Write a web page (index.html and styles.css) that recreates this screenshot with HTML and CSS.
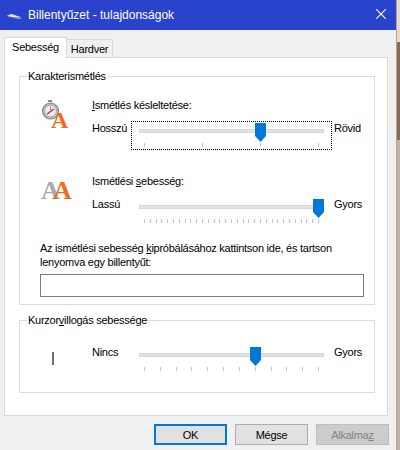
FILE: index.html
```html
<!DOCTYPE html>
<html lang="hu">
<head>
    <meta charset="UTF-8">
    <meta name="viewport" content="width=device-width, initial-scale=1.0">
    <title>Billentyűzet - tulajdonságok</title>
    <link rel="stylesheet" href="styles.css">
</head>
<body>
    <div class="window">
        <div class="titlebar">
            <svg class="app-icon" width="16" height="16" viewBox="0 0 16 16">
                <path d="M0 9 L4 7 L14 10 L14 12 L10 12 Z" fill="#8f95a3"/>
                <path d="M0 9 L4 7 L13 10 L6 10 Z" fill="#e6e8ee"/>
            </svg>
            <span class="title">Billentyűzet - tulajdonságok</span>
            <svg class="close" width="10" height="10" viewBox="0 0 10 10">
                <path d="M0 0 L10 10 M10 0 L0 10" stroke="#fff" stroke-width="1.1" fill="none"/>
            </svg>
        </div>

        <div class="content">
            <div class="tabs">
                <div class="tab active">Sebesség</div>
                <div class="tab">Hardver</div>
            </div>

            <div class="panel">
                <!-- Karakterismétlés -->
                <fieldset class="group group-repeat">
                    <legend>Karakterismétlés</legend>
                    <div class="group-inner">
                        <div class="setting">
                            <svg class="setting-icon" width="32" height="40" viewBox="0 0 32 40">
                                <rect x="7" y="3" width="4" height="2" fill="#8a8a8a"/>
                                <circle cx="9.5" cy="14" r="8" fill="#bdbdbd" stroke="#858585" stroke-width="1.2"/>
                                <circle cx="9.5" cy="14" r="5.8" fill="#ededed" stroke="#a4a4a4" stroke-width="0.8"/>
                                <path d="M6 17 L13 12" stroke="#c8283a" stroke-width="1.4"/>
                                <path d="M9.5 9.5 V13" stroke="#8a8a8a" stroke-width="1"/>
                                <text class="icon-letter" x="10" y="31" font-size="24" fill="#f26a1b">A</text>
                            </svg>
                            <div class="setting-body">
                                <div class="caption"><u>I</u>smétlés késleltetése:</div>
                                <div class="slider-row">
                                    <span class="end-label">Hosszú</span>
                                    <div class="slider focused">
                                        <div class="track"></div>
                                        <div class="thumb thumb-delay"></div>
                                        <div class="ticks">
                                            <i></i><i></i><i></i><i></i>
                                        </div>
                                    </div>
                                    <span class="end-label right">Rövid</span>
                                </div>
                            </div>
                        </div>

                        <div class="setting setting-rate">
                            <svg class="setting-icon rate-icon" width="32" height="32" viewBox="0 0 32 32">
                                <text class="icon-letter" x="0" y="22" font-size="26" fill="#a9a9a9">A</text>
                                <text class="icon-letter" x="12" y="22" font-size="26" fill="#f26a1b">A</text>
                            </svg>
                            <div class="setting-body">
                                <div class="caption">Ismétlési <u>s</u>ebesség:</div>
                                <div class="slider-row">
                                    <span class="end-label">Lassú</span>
                                    <div class="slider">
                                        <div class="track"></div>
                                        <div class="thumb thumb-rate"></div>
                                        <div class="ticks">
                                            <i></i><i></i><i></i><i></i><i></i><i></i><i></i><i></i><i></i><i></i><i></i><i></i><i></i><i></i><i></i><i></i><i></i><i></i><i></i><i></i><i></i><i></i><i></i><i></i><i></i><i></i><i></i><i></i><i></i><i></i><i></i>
                                        </div>
                                    </div>
                                    <span class="end-label right">Gyors</span>
                                </div>
                            </div>
                        </div>

                        <p class="try-text">Az ismétlési sebesség <u>k</u>ipróbálásához kattintson ide, és tartson<br>lenyomva egy billentyűt:</p>
                        <div class="try-input"></div>
                    </div>
                </fieldset>

                <!-- Kurzorvillogás -->
                <fieldset class="group group-cursor">
                    <legend>Kurzor<u>v</u>illogás sebessége</legend>
                    <div class="cursor-row">
                        <div class="cursor-col"><span class="cursor-bar"></span></div>
                        <span class="end-label">Nincs</span>
                        <div class="slider">
                            <div class="track"></div>
                            <div class="thumb thumb-cursor"></div>
                            <div class="ticks">
                                <i></i><i></i><i></i><i></i><i></i><i></i><i></i><i></i><i></i><i></i><i></i><i></i>
                            </div>
                        </div>
                        <span class="end-label right">Gyors</span>
                    </div>
                </fieldset>
            </div>

            <div class="buttons">
                <button class="btn default">OK</button>
                <button class="btn">Mégse</button>
                <button class="btn" disabled>Alkalma<u>z</u></button>
            </div>
        </div>
    </div>
</body>
</html>
```

FILE: styles.css
```css
* {
    box-sizing: border-box;
}

html, body {
    height: 100%;
}

body {
    margin: 0;
    overflow: hidden;
    background: linear-gradient(#dcdcdc 0, #dcdcdc 42px, #77716d 42px, #77716d 140px, #b5b5b5 140px);
    font-family: "Liberation Sans", Roboto, sans-serif;
    font-size: 11px;
    letter-spacing: -0.26px;
    color: #000;
}

u {
    text-underline-offset: 1px;
}

.window {
    width: 397px;
    height: 450px;
    background: #f0f0f0;
    border-right: 1px solid #e8975a;
}

.titlebar {
    display: flex;
    align-items: center;
    height: 30px;
    padding: 0 10px 0 7px;
    background: #2a43cc;
    color: #fff;
    font-size: 12px;
    letter-spacing: 0;
}

.app-icon {
    margin-right: 5px;
}

.title {
    flex: 1;
}

.close {
    margin-top: -2px;
}

.content {
    padding: 7px 8px 0 4px;
}

.tabs {
    display: flex;
    align-items: flex-end;
    height: 20px;
}

.tab {
    width: 46px;
    height: 18px;
    line-height: 18px;
    text-align: center;
    background: #f0f0f0;
    border: 1px solid #d9d9d9;
    border-bottom: none;
    border-left: none;
}

.tab.active {
    width: 63px;
    height: 21px;
    margin-bottom: -1px;
    line-height: 18px;
    background: #fff;
    border-left: 1px solid #d9d9d9;
    position: relative;
    z-index: 1;
}

.panel {
    height: 359px;
    padding: 10px 12px 0 14px;
    background: #fff;
    border: 1px solid #d9d9d9;
}

.group {
    margin: 0;
    padding: 0;
    min-width: 0;
    border: 1px solid #dcdcdc;
}

.group legend {
    margin-left: 7px;
    padding: 0 1px;
    line-height: 16px;
}

.group-repeat {
    height: 237px;
}

.group-cursor {
    height: 81px;
    margin-top: 7px;
}

.group-inner {
    padding: 13px 10px 0 20px;
}

.setting {
    display: flex;
}

.setting-icon {
    flex: none;
    margin-left: 1px;
}

.icon-letter {
    font-family: "Liberation Serif", serif;
    font-weight: bold;
    letter-spacing: 0;
}

.setting-rate {
    margin-top: 23px;
}

.rate-icon {
    margin-top: 4px;
}

.setting-body {
    flex: 1;
    margin-left: 19px;
}

.caption {
    line-height: 16px;
}

.slider-row {
    display: flex;
    margin-top: 7px;
}

.end-label {
    flex: none;
    width: 39px;
    line-height: 16px;
}

.end-label.right {
    width: auto;
    margin-left: 2px;
}

.slider {
    position: relative;
    width: 201px;
    height: 29px;
    margin-top: 1px;
    border: 1px solid transparent;
}

.slider.focused {
    border: 1px dotted #000;
}

.track {
    position: absolute;
    left: 7px;
    top: 7px;
    width: 185px;
    height: 4px;
    background: #e2e3e3;
    border: 1px solid #d6d6d6;
}

.thumb {
    position: absolute;
    top: 1px;
    width: 11px;
    height: 19px;
    background: #0078d7;
    clip-path: polygon(0 0, 100% 0, 100% 68%, 50% 100%, 0 68%);
}

.thumb-delay {
    left: 123px;
}

.thumb-rate {
    left: 181px;
}

.thumb-cursor {
    left: 118px;
}

.ticks {
    position: absolute;
    left: 12px;
    top: 21px;
    width: 175px;
    display: flex;
    justify-content: space-between;
}

.ticks i {
    display: block;
    width: 1px;
    height: 4px;
    background: #c4c4c4;
}

.try-text {
    margin: 15px 0 0;
    line-height: 14px;
    white-space: nowrap;
}

.try-input {
    height: 23px;
    margin-top: 5px;
    background: #fff;
    border: 1px solid #7a7a7a;
}

.cursor-row {
    display: flex;
    padding-top: 16px;
}

.cursor-col {
    flex: none;
    width: 72px;
    padding: 8px 0 0 32px;
}

.cursor-bar {
    display: block;
    width: 2px;
    height: 13px;
    background: #6d6d6d;
}

.buttons {
    display: flex;
    justify-content: flex-end;
    gap: 8px;
    margin-top: 8px;
    margin-right: -1px;
}

.btn {
    width: 73px;
    height: 21px;
    padding: 0;
    font: inherit;
    letter-spacing: inherit;
    color: #000;
    background: #e1e1e1;
    border: 1px solid #adadad;
}

.btn.default {
    border: 2px solid #0078d7;
}

.btn:disabled {
    color: #838383;
    background: #cccccc;
    border-color: #bfbfbf;
}
```
